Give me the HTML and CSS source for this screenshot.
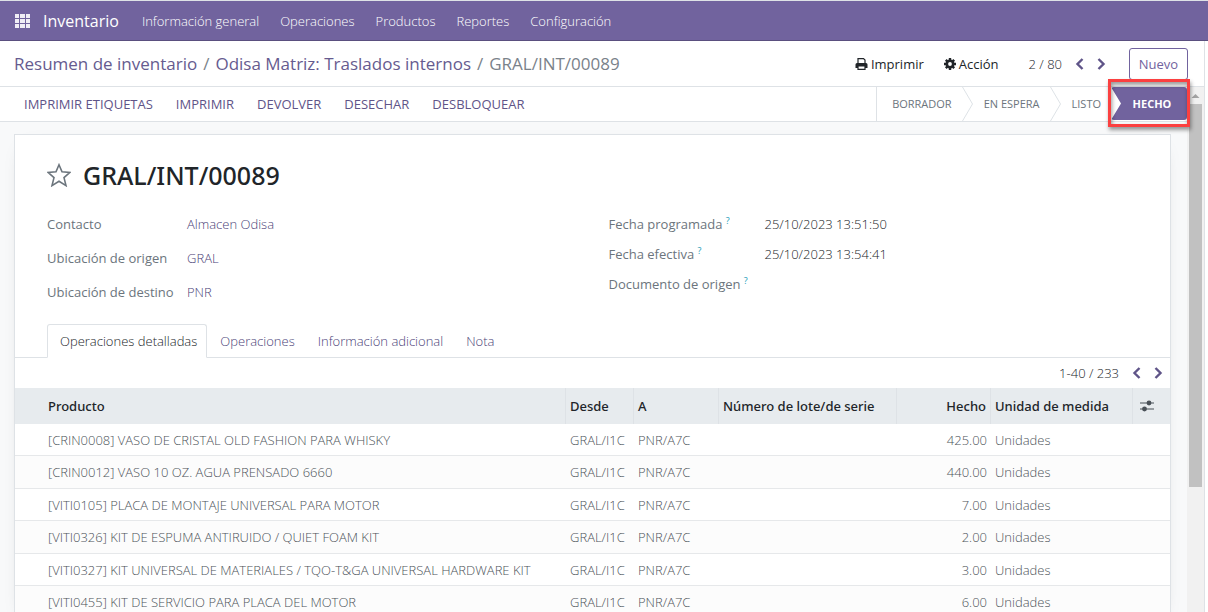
FILE: index.html
```html
<!DOCTYPE html>
<html lang="es">
<head>
  <meta charset="UTF-8">
  <meta name="viewport" content="width=device-width, initial-scale=1.0">
  <title>Inventario</title>
  <link rel="stylesheet" href="styles.css">
</head>
<body>
  <header class="navbar">
    <button class="apps" aria-label="Aplicaciones">
      <svg width="15" height="14" viewBox="0 0 15 14" fill="currentColor" shape-rendering="crispEdges">
        <path d="M0 0h4v4H0zM5 0h5v4H5zM11 0h4v4h-4zM0 5h4v4H0zM5 5h5v4H5zM11 5h4v4h-4zM0 10h4v4H0zM5 10h5v4H5zM11 10h4v4h-4z"/>
      </svg>
    </button>
    <a class="brand" href="#">Inventario</a>
    <nav class="menu">
      <a href="#">Información general</a>
      <a href="#">Operaciones</a>
      <a href="#">Productos</a>
      <a href="#">Reportes</a>
      <a href="#">Configuración</a>
    </nav>
  </header>

  <div class="page">
    <div class="control-panel">
      <div class="breadcrumb">
        <a href="#">Resumen de inventario</a>
        <span>/</span>
        <a href="#">Odisa Matriz: Traslados internos</a>
        <span>/</span>
        <span>GRAL/INT/00089</span>
      </div>
      <div class="actions">
        <button class="action">
          <svg width="13" height="12" viewBox="0 0 13 12" fill="none" stroke="currentColor">
            <path d="M3 6V.6h5.500L10 2.100V6" stroke-width="1.200"/>
            <path d="M2 5h9a1.500 1.500 0 0 1 1.500 1.500V10H.5V6.500A1.500 1.500 0 0 1 2 5z" fill="currentColor" stroke="none"/>
            <path d="M3 8h7v3.400H3z" fill="#fff" stroke-width="1.200"/>
          </svg>
          Imprimir
        </button>
        <button class="action">
          <svg width="12" height="12" viewBox="0 0 12 12">
            <path d="M6 0v12M0 6h12M1.800 1.800l8.400 8.400M10.200 1.800l-8.400 8.400" stroke="currentColor" stroke-width="2.400"/>
            <circle cx="6" cy="6" r="3.200" fill="none" stroke="currentColor" stroke-width="2.600"/>
            <circle cx="6" cy="6" r="1.900" fill="#fff"/>
          </svg>
          Acción
        </button>
      </div>
      <div class="pager">
        <span>2 / 80</span>
        <button aria-label="Anterior"><svg width="9" height="12" viewBox="0 0 9 12"><path d="M7.500 1L2.500 6l5 5"/></svg></button>
        <button aria-label="Siguiente"><svg width="9" height="12" viewBox="0 0 9 12"><path d="M1.500 1l5 5-5 5"/></svg></button>
      </div>
      <button class="btn-new">Nuevo</button>
    </div>

    <div class="main">
      <div class="content">
        <div class="statusbar">
          <div class="status-buttons">
            <button>IMPRIMIR ETIQUETAS</button>
            <button>IMPRIMIR</button>
            <button>DEVOLVER</button>
            <button>DESECHAR</button>
            <button>DESBLOQUEAR</button>
          </div>
          <div class="stages">
            <button class="stage">BORRADOR</button>
            <svg class="arrow" width="11" height="34" viewBox="0 0 11 34"><path d="M.5 0l10 17-10 17"/></svg>
            <button class="stage">EN ESPERA</button>
            <svg class="arrow" width="11" height="34" viewBox="0 0 11 34"><path d="M.5 0l10 17-10 17"/></svg>
            <button class="stage">LISTO</button>
            <div class="current">
              <button class="stage-current">HECHO</button>
              <div class="highlight"></div>
            </div>
          </div>
        </div>

        <main class="sheet">
          <div class="title">
            <button class="star" aria-label="Favorito">
              <svg width="24" height="24" viewBox="0 0 24 24" fill="none" stroke="currentColor" stroke-width="1.600">
                <path d="M12 1.800l3 7 8 .6-6 5.200 2 8-7-4.300-7 4.300 2-8-6-5.200 8-.6z"/>
              </svg>
            </button>
            <h1>GRAL/INT/00089</h1>
          </div>

          <div class="groups">
            <dl class="group group-links">
              <dt>Contacto</dt>
              <dd><a href="#">Almacen Odisa</a></dd>
              <dt>Ubicación de origen</dt>
              <dd><a href="#">GRAL</a></dd>
              <dt>Ubicación de destino</dt>
              <dd><a href="#">PNR</a></dd>
            </dl>
            <dl class="group group-dates">
              <dt>Fecha programada <sup>?</sup></dt>
              <dd>25/10/2023 13:51:50</dd>
              <dt>Fecha efectiva <sup>?</sup></dt>
              <dd>25/10/2023 13:54:41</dd>
              <dt>Documento de origen <sup>?</sup></dt>
              <dd></dd>
            </dl>
          </div>

          <div class="tabs">
            <button class="tab active">Operaciones detalladas</button>
            <button class="tab">Operaciones</button>
            <button class="tab">Información adicional</button>
            <button class="tab">Nota</button>
          </div>

          <div class="pager list-pager">
            <span>1-40 / 233</span>
            <button aria-label="Anterior"><svg width="9" height="12" viewBox="0 0 9 12"><path d="M7.500 1L2.500 6l5 5"/></svg></button>
            <button aria-label="Siguiente"><svg width="9" height="12" viewBox="0 0 9 12"><path d="M1.500 1l5 5-5 5"/></svg></button>
          </div>

          <table>
            <colgroup>
              <col>
              <col class="col-from">
              <col class="col-to">
              <col class="col-lot">
              <col class="col-done">
              <col class="col-unit">
              <col class="col-options">
            </colgroup>
            <thead>
              <tr>
                <th>Producto</th>
                <th>Desde</th>
                <th>A</th>
                <th>Número de lote/de serie</th>
                <th class="number">Hecho</th>
                <th>Unidad de medida</th>
                <th class="options">
                  <button aria-label="Columnas">
                    <svg width="14" height="12" viewBox="0 0 14 12" fill="currentColor">
                      <path d="M0 2.500h14v1H0zM0 8.500h14v1H0z"/>
                      <circle cx="9" cy="3" r="2.400"/>
                      <circle cx="4.500" cy="9" r="2.400"/>
                    </svg>
                  </button>
                </th>
              </tr>
            </thead>
            <tbody>
              <tr><td>[CRIN0008] VASO DE CRISTAL OLD FASHION PARA WHISKY</td><td>GRAL/I1C</td><td>PNR/A7C</td><td></td><td class="number">425.00</td><td>Unidades</td><td></td></tr>
              <tr><td>[CRIN0012] VASO 10 OZ. AGUA PRENSADO 6660</td><td>GRAL/I1C</td><td>PNR/A7C</td><td></td><td class="number">440.00</td><td>Unidades</td><td></td></tr>
              <tr><td>[VITI0105] PLACA DE MONTAJE UNIVERSAL PARA MOTOR</td><td>GRAL/I1C</td><td>PNR/A7C</td><td></td><td class="number">7.00</td><td>Unidades</td><td></td></tr>
              <tr><td>[VITI0326] KIT DE ESPUMA ANTIRUIDO / QUIET FOAM KIT</td><td>GRAL/I1C</td><td>PNR/A7C</td><td></td><td class="number">2.00</td><td>Unidades</td><td></td></tr>
              <tr><td>[VITI0327] KIT UNIVERSAL DE MATERIALES / TQO-T&amp;GA UNIVERSAL HARDWARE KIT</td><td>GRAL/I1C</td><td>PNR/A7C</td><td></td><td class="number">3.00</td><td>Unidades</td><td></td></tr>
              <tr><td>[VITI0455] KIT DE SERVICIO PARA PLACA DEL MOTOR</td><td>GRAL/I1C</td><td>PNR/A7C</td><td></td><td class="number">6.00</td><td>Unidades</td><td></td></tr>
            </tbody>
          </table>
        </main>
      </div>
      <div class="scrollbar">
        <svg width="17" height="17" viewBox="0 0 17 17"><path d="M4.500 11l4-4 4 4z" fill="#a3a3a3"/></svg>
        <div class="thumb"></div>
      </div>
    </div>
  </div>
</body>
</html>
```
FILE: styles.css
```css
* {
  box-sizing: border-box;
}

body {
  margin: 0;
  height: 100vh;
  display: flex;
  flex-direction: column;
  overflow: hidden;
  font-family: "Open Sans", "Noto Sans", sans-serif;
  font-size: 13px;
  font-weight: 300;
  line-height: 20px;
  color: #212529;
  background-color: #fff;
}

a {
  color: #4b3f78;
  text-decoration: none;
}

button {
  margin: 0;
  padding: 0;
  border: none;
  background: none;
  font: inherit;
  color: inherit;
  white-space: nowrap;
  cursor: pointer;
}

svg {
  display: block;
  flex: none;
}

/* Top bar */
.navbar {
  display: flex;
  align-items: center;
  flex: none;
  height: 41px;
  padding-left: 15px;
  background-color: #71639e;
  border-top: 1px solid #dee2e6;
  border-bottom: 1px solid #5a4f7f;
  color: #fff;
}

.navbar a {
  color: inherit;
}

.apps {
  color: #f0eef5;
}

.brand {
  margin-left: 13px;
  font-size: 16px;
  font-weight: 400;
}

.menu {
  display: flex;
  gap: 21px;
  margin-left: 23px;
}

.page {
  flex: 1;
  min-height: 0;
  display: flex;
  flex-direction: column;
  margin-right: 3px;
  border-right: 1px solid #dee2e6;
}

/* Breadcrumb and pager */
.control-panel {
  display: flex;
  align-items: center;
  flex: none;
  height: 46px;
  padding: 0 16px 0 14px;
  border-bottom: 1px solid #dee2e6;
}

.breadcrumb {
  display: flex;
  gap: 6px;
  flex: 1;
  font-size: 17px;
  font-weight: 400;
  color: #7a828a;
  white-space: nowrap;
}

.breadcrumb a {
  color: #665b8f;
}

.actions {
  display: flex;
  gap: 20px;
}

.action {
  display: flex;
  align-items: center;
  gap: 3px;
  font-weight: 500;
}

.pager {
  display: flex;
  align-items: center;
  gap: 13px;
  margin-left: 30px;
}

.pager path {
  fill: none;
  stroke: #5f5488;
  stroke-width: 2.4;
}

.btn-new {
  width: 59px;
  height: 32px;
  margin-left: 23px;
  border: 1px solid #71639e;
  border-radius: 3px;
  color: #71639e;
  font-weight: 400;
}

.main {
  flex: 1;
  min-height: 0;
  display: flex;
}

.content {
  flex: 1;
  min-width: 0;
  background-color: #f8f9fa;
}

/* Status bar */
.statusbar {
  display: flex;
  justify-content: space-between;
  height: 35px;
  padding-left: 24px;
  background-color: #fff;
  border-bottom: 1px solid #dee2e6;
}

.status-buttons {
  display: flex;
  gap: 23px;
  font-weight: 400;
  color: #5f5488;
}

.stages {
  display: flex;
  align-items: center;
  border-left: 1px solid #dee2e6;
  font-size: 11px;
  font-weight: 400;
  color: #6c757d;
}

.stage {
  padding: 0 10px 0 15px;
}

.stage + .arrow + .stage {
  padding-left: 11px;
}

.arrow path {
  fill: none;
  stroke: #dee2e6;
}

.current {
  position: relative;
  align-self: flex-start;
}

.stage-current {
  display: block;
  width: 76px;
  height: 33px;
  padding-left: 6px;
  border-radius: 3px;
  background-color: #71639e;
  clip-path: polygon(0 0, 100% 0, 100% 100%, 0 100%, 10px 50%);
  color: #fff;
  font-weight: 700;
}

.highlight {
  position: absolute;
  top: -8px;
  right: -3px;
  bottom: -7px;
  left: -3px;
  border: 3px solid #fb4040;
  box-shadow: 1px 3px 4px rgba(0, 0, 0, 0.4), inset 1px 3px 4px rgba(0, 0, 0, 0.4);
  pointer-events: none;
}

/* Form sheet */
.sheet {
  margin: 12px 16px 0 14px;
  background-color: #fff;
  border: 1px solid #dee2e6;
  box-shadow: 0 5px 20px -15px rgba(0, 0, 0, 0.4);
}

.title {
  display: flex;
  align-items: center;
  gap: 12px;
  padding: 23px 32px 0;
}

.star {
  color: #6c757d;
}

h1 {
  margin: 0;
  font-family: "Noto Sans", "Open Sans", sans-serif;
  font-size: 25px;
  line-height: 34px;
  font-weight: 500;
  color: #212529;
}

.groups {
  display: grid;
  grid-template-columns: 1fr 1fr;
  padding: 22px 32px 0;
}

.group {
  display: grid;
  align-content: start;
  margin: 0;
}

.group-links {
  grid-template-columns: 140px 1fr;
  row-gap: 14px;
}

.group-dates {
  grid-template-columns: 156px 1fr;
  row-gap: 10px;
  padding-left: 16px;
}

dt {
  font-weight: 400;
  color: #6c757d;
}

dd {
  margin: 0;
}

sup {
  font-size: 9px;
  line-height: 0;
  color: #1d9cb8;
}

.tabs {
  display: flex;
  height: 34px;
  margin-top: 22px;
  padding-left: 32px;
  border-bottom: 1px solid #dee2e6;
}

.tab {
  height: 34px;
  padding: 0 9px 0 12px;
  border: 1px solid transparent;
  border-radius: 3px 3px 0 0;
  color: #4b3f78;
}

.tab.active {
  border-color: #dee2e6 #dee2e6 #fff;
  background-color: #fff;
  color: #212529;
}

.list-pager {
  justify-content: flex-end;
  height: 30px;
  padding-right: 7px;
}

/* Operation lines */
table {
  width: 100%;
  table-layout: fixed;
  border-spacing: 0;
}

.col-from {
  width: 68px;
}

.col-to {
  width: 85px;
}

.col-lot {
  width: 178px;
}

.col-done {
  width: 94px;
}

.col-unit {
  width: 142px;
}

.col-options {
  width: 37px;
}

th,
td {
  padding: 0 4px;
  text-align: left;
  white-space: nowrap;
}

th:first-child,
td:first-child {
  padding-left: 33px;
}

th {
  height: 36px;
  background-color: #e7ebee;
  border-right: 1px solid #dee2e6;
  font-family: "Noto Sans", "Open Sans", sans-serif;
  font-weight: 500;
  color: #212529;
}

th:last-child {
  border-right: none;
}

th.options {
  padding-left: 7px;
  color: #495057;
}

th.options button {
  display: block;
}

td {
  height: 32px;
  border-bottom: 1px solid #e6e8ea;
  color: #4c5359;
}

tbody tr:nth-child(even) td {
  height: 33px;
  background-color: #fcfcfc;
}

th.number,
td.number {
  text-align: right;
}

/* Page scrollbar */
.scrollbar {
  width: 17px;
  flex: none;
  background-color: #f1f1f1;
}

.thumb {
  height: 73%;
  margin: 0 2px;
  background-color: #c1c1c1;
}
```
